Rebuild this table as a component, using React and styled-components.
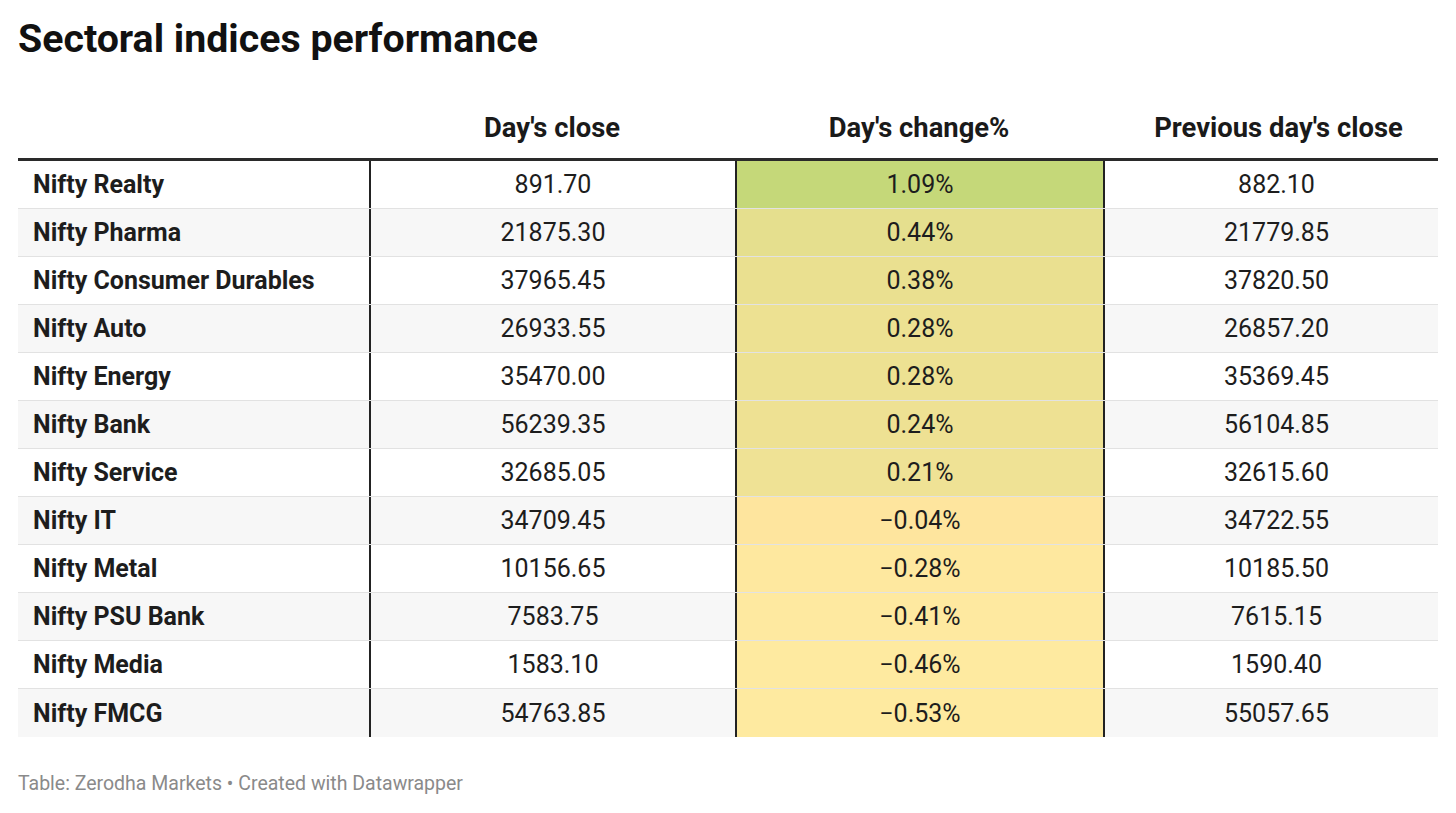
import React from "react";
import styled, { createGlobalStyle } from "styled-components";

const Global = createGlobalStyle`
  html, body { margin: 0; padding: 0; background: #fff; }
  body { font-family: Roboto, "Liberation Sans", Arial, sans-serif; color: #1d1d1d; }
`;

const Page = styled.div`
  width: 1456px;
  padding: 16px 18px 0 18px;
  box-sizing: border-box;
`;

const Title = styled.h1`
  margin: 0;
  font-size: 39.3px;
  line-height: 46px;
  font-weight: 700;
  color: #111;
`;

const Table = styled.div`
  margin-top: 50px;
  width: 1420px;
`;

const Row = styled.div`
  display: grid;
  grid-template-columns: 351px 366px 368px 1fr;
  background: ${(p) => (p.$shade ? "#f7f7f7" : "#fff")};
  border-bottom: ${(p) => (p.$last ? "none" : "1px solid #e2e2e2")};
  height: 48px;
  box-sizing: border-box;
`;

const HeadRow = styled.div`
  display: grid;
  grid-template-columns: 351px 366px 368px 1fr;
  border-bottom: 3px solid #2a2a2a;
  padding-bottom: 14px;
`;

const HeadCell = styled.div`
  font-size: 27.4px;
  line-height: 32px;
  font-weight: 700;
  color: #1a1a1a;
  text-align: center;
  padding-left: ${(p) => p.$pad || "0px"};
`;

const Cell = styled.div`
  display: flex;
  align-items: center;
  justify-content: ${(p) => (p.$name ? "flex-start" : "center")};
  padding-left: ${(p) => p.$pad || "0px"};
  font-size: 25px;
  font-weight: ${(p) => (p.$name ? 700 : 400)};
  color: #1d1d1d;
  border-left: ${(p) => (p.$divider ? "2px solid #222" : "none")};
  background: ${(p) => p.$bg || "transparent"};
  box-sizing: border-box;
`;

const Footer = styled.div`
  margin-top: 35px;
  font-size: 19.5px;
  color: #8a8a8a;
  line-height: 23px;
`;

const data = [
  ["Nifty Realty", "891.70", "1.09%", "882.10", "#c5d879"],
  ["Nifty Pharma", "21875.30", "0.44%", "21779.85", "#e5df8e"],
  ["Nifty Consumer Durables", "37965.45", "0.38%", "37820.50", "#eae090"],
  ["Nifty Auto", "26933.55", "0.28%", "26857.20", "#ede192"],
  ["Nifty Energy", "35470.00", "0.28%", "35369.45", "#ede192"],
  ["Nifty Bank", "56239.35", "0.24%", "56104.85", "#eee193"],
  ["Nifty Service", "32685.05", "0.21%", "32615.60", "#efe295"],
  ["Nifty IT", "34709.45", "\u22120.04%", "34722.55", "#fee59e"],
  ["Nifty Metal", "10156.65", "\u22120.28%", "10185.50", "#fee89f"],
  ["Nifty PSU Bank", "7583.75", "\u22120.41%", "7615.15", "#fee9a0"],
  ["Nifty Media", "1583.10", "\u22120.46%", "1590.40", "#feeaa0"],
  ["Nifty FMCG", "54763.85", "\u22120.53%", "55057.65", "#feeaa0"],
];

export default function App() {
  return (
    <Page>
      <Global />
      <Title>Sectoral indices performance</Title>
      <Table>
        <HeadRow>
          <HeadCell />
          <HeadCell>Day's close</HeadCell>
          <HeadCell>Day's change%</HeadCell>
          <HeadCell $pad="16px">Previous day's close</HeadCell>
        </HeadRow>
        {data.map(([name, close, change, prev, bg], i) => (
          <Row key={name} $shade={i % 2 === 1} $last={i === data.length - 1}>
            <Cell $name $pad="15px">{name}</Cell>
            <Cell $divider>{close}</Cell>
            <Cell $divider $bg={bg}>{change}</Cell>
            <Cell $divider $pad="10px">{prev}</Cell>
          </Row>
        ))}
      </Table>
      <Footer>Table: Zerodha Markets • Created with Datawrapper</Footer>
    </Page>
  );
}
